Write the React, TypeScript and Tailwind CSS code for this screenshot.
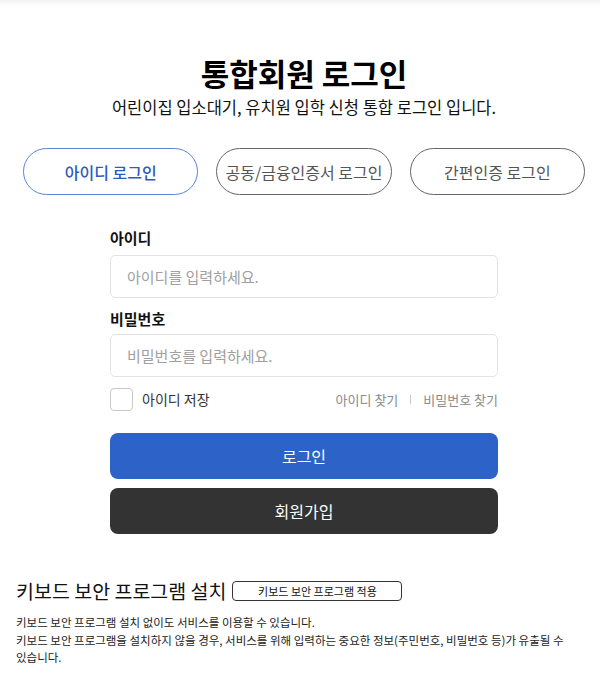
const font = { fontFamily: '"Noto Sans CJK KR", "Noto Sans", sans-serif' };

const tabs = ["아이디 로그인", "공동/금융인증서 로그인", "간편인증 로그인"];

const App = () => {
    return (
        <div className="min-h-[679px] bg-white text-[#111]" style={font}>
            <div className="h-[6px] bg-gradient-to-b from-[#f2f2f2] to-white" />
            <div className="pl-2">
                <div className="pt-[47px] text-center">
                    <h1 className="text-[31px] font-bold leading-[40px] text-black">통합회원 로그인</h1>
                    <p className="mt-[2px] text-[16.5px] leading-[24px] text-[#111]">
                        어린이집 입소대기, 유치원 입학 신청 통합 로그인 입니다.
                    </p>
                </div>

                <div className="mt-[29px] flex gap-[18px] px-[15px]">
                    {tabs.map((t, i) => (
                        <button
                            key={t}
                            className={
                                i === 0
                                    ? "h-[47px] flex-1 rounded-full border border-[#5b84d6] text-[16px] font-medium text-[#2d5bbd]"
                                    : "h-[47px] flex-1 rounded-full border border-[#666] text-[16px] text-[#555]"
                            }
                        >
                            {t}
                        </button>
                    ))}
                </div>

                <div className="mx-auto mt-[32px] w-[388px]">
                    <label className="block text-[15px] font-bold leading-[22px] text-[#111]">아이디</label>
                    <input
                        className="mt-[6px] h-[43px] w-full rounded-[5px] border border-[#e3e3e3] px-4 text-[15px] outline-none placeholder:text-[#a0a0a0]"
                        placeholder="아이디를 입력하세요."
                    />
                    <label className="mt-[10px] block text-[15px] font-bold leading-[22px] text-[#111]">비밀번호</label>
                    <input
                        type="password"
                        className="mt-[4px] h-[43px] w-full rounded-[5px] border border-[#e3e3e3] px-4 text-[15px] outline-none placeholder:text-[#a0a0a0]"
                        placeholder="비밀번호를 입력하세요."
                    />
                    <div className="mt-[11px] flex items-center justify-between">
                        <label className="flex items-center gap-[9px] text-[14px] text-[#333]">
                            <span className="h-[23px] w-[23px] rounded-[4px] border border-[#c8c8c8] bg-white" />
                            아이디 저장
                        </label>
                        <div className="flex items-center gap-[12px] text-[13px] text-[#8a8a8a]">
                            <a href="#">아이디 찾기</a>
                            <span className="h-[9px] w-px bg-[#c8c8c8]" />
                            <a href="#">비밀번호 찾기</a>
                        </div>
                    </div>
                    <button className="mt-[22px] h-[46px] w-full rounded-[8px] bg-[#2d63c8] text-[16px] text-white">
                        로그인
                    </button>
                    <button className="mt-[9px] h-[46px] w-full rounded-[8px] bg-[#333333] text-[16px] text-white">
                        회원가입
                    </button>
                </div>

                <div className="mt-[43px] px-2">
                    <div className="flex items-center gap-[6px]">
                        <h2 className="text-[19.5px] leading-[28px] text-[#111]">키보드 보안 프로그램 설치</h2>
                        <button className="h-[20px] w-[170px] rounded-[4px] border border-[#333] text-[11px] leading-none text-[#111]">
                            키보드 보안 프로그램 적용
                        </button>
                    </div>
                    <div className="mt-[9px] max-w-[570px] break-keep text-[11.5px] leading-[17.5px] text-[#222]">
                        <p>키보드 보안 프로그램 설치 없이도 서비스를 이용할 수 있습니다.</p>
                        <p>
                            키보드 보안 프로그램을 설치하지 않을 경우, 서비스를 위해 입력하는 중요한 정보(주민번호, 비밀번호 등)가 유출될 수
                            있습니다.
                        </p>
                    </div>
                </div>
            </div>
        </div>
    );
};

export default App;
